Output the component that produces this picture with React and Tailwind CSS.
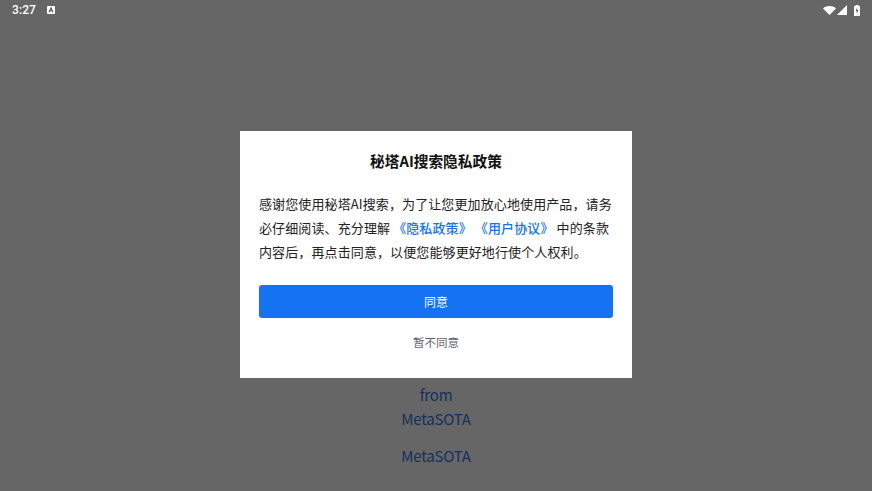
const cjk = "font-['Noto_Sans_CJK_SC','Noto_Sans',sans-serif]"

function StatusBar() {
  return (
    <div className="flex h-[20px] items-center justify-between pl-[12px] pr-[12px] text-white">
      <div className="flex items-center gap-[11px]">
        <span className="font-['Roboto',sans-serif] text-[12px] font-medium leading-none tracking-[0.1px]">3:27</span>
        <svg width="8" height="8" viewBox="0 0 8 8">
          <rect width="8" height="8" rx="1" fill="#fff" />
          <path d="M2 6.2 4 1.8 6 6.2M2.9 4.8h2.2" stroke="#555" strokeWidth="1.1" fill="none" />
        </svg>
      </div>
      <div className="flex items-center">
        <svg width="13" height="9" viewBox="0 0 13 9">
          <path d="M0 2.4C3.6-.8 9.4-.8 13 2.4L6.5 9Z" fill="#fff" />
        </svg>
        <svg className="ml-[1px]" width="10" height="10" viewBox="0 0 10 10">
          <path d="M10 0V10H0Z" fill="#fff" />
        </svg>
        <svg className="ml-[7px]" width="6" height="11" viewBox="0 0 6 11">
          <path d="M1.5 0h3v1H6v10H0V1h1.5Z" fill="#fff" />
          <path d="M3.4 2.2 1.6 6h1.2L2.5 8.8l2-3.8H3.2Z" fill="#555" />
        </svg>
      </div>
    </div>
  )
}

function Modal() {
  return (
    <div className="absolute inset-0 flex items-start justify-center pt-[131px]">
      <div className={`h-[247px] w-[392px] bg-white px-[19px] ${cjk}`}>
        <h2 className="mt-[20px] text-center text-[14.7px] font-bold leading-[20px] text-[#111]">秘塔AI搜索隐私政策</h2>
        <p className="mt-[21px] text-[13px] leading-[24px] tracking-[0.11px] text-[#222]">
          感谢您使用秘塔AI搜索，为了让您更加放心地使用产品，请务<br />
          必仔细阅读、充分理解
          <span className="font-medium text-[#1672f3]"> 《隐私政策》 《用户协议》 </span>
          中的条款<br />
          内容后，再点击同意，以便您能够更好地行使个人权利。
        </p>
        <button className="mt-[21px] flex h-[33px] w-full items-center justify-center rounded-[3px] bg-[#1472f3] text-[12px] text-white">同意</button>
        <div className="mt-[15px] text-center text-[11.5px] leading-[18px] text-[#5b6472]">暂不同意</div>
      </div>
    </div>
  )
}

export default function App() {
  return (
    <div className="relative flex h-[491px] w-[872px] flex-col overflow-hidden bg-[#666666]">
      <StatusBar />
      <div className={`mt-auto flex flex-col items-center pb-[23px] text-[15px] tracking-[-0.2px] text-[#14305f] ${cjk}`}>
        <span className="leading-[24px]">from</span>
        <span className="leading-[24px]">MetaSOTA</span>
        <span className="mt-[13px] leading-[24px]">MetaSOTA</span>
      </div>
      <Modal />
    </div>
  )
}
